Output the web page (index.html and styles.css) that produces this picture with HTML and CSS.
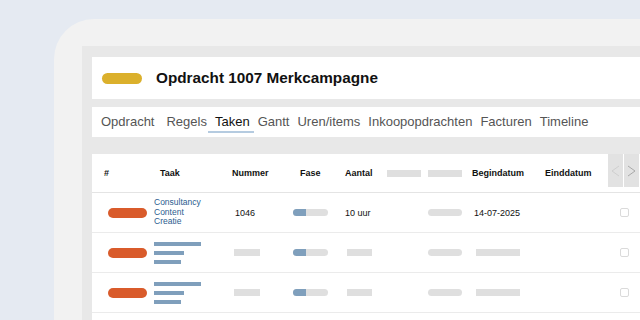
FILE: index.html
```html
<!DOCTYPE html>
<html lang="nl">
<head>
    <meta charset="UTF-8">
    <title>Opdracht 1007 Merkcampagne</title>
    <link rel="stylesheet" href="styles.css">
</head>
<body>
    <div class="device">
        <div class="panel">
            <div class="card title-card">
                <span class="status-pill"></span>
                <h1>Opdracht 1007 Merkcampagne</h1>
            </div>

            <div class="card tabs">
                <span class="tab first">Opdracht</span>
                <span class="tab">Regels</span>
                <span class="tab active">Taken</span>
                <span class="tab">Gantt</span>
                <span class="tab">Uren/items</span>
                <span class="tab">Inkoopopdrachten</span>
                <span class="tab">Facturen</span>
                <span class="tab">Timeline</span>
            </div>

            <div class="card table">
                <div class="row thead">
                    <div class="c-hash">#</div>
                    <div class="c-taak">Taak</div>
                    <div class="c-nummer">Nummer</div>
                    <div class="c-fase">Fase</div>
                    <div class="c-aantal">Aantal</div>
                    <div><span class="ph head-ph"></span></div>
                    <div><span class="ph head-ph"></span></div>
                    <div>Begindatum</div>
                    <div>Einddatum</div>
                    <div class="nav">
                        <span class="nav-btn prev">
                            <svg width="9" height="12" viewBox="0 0 9 12"><polyline points="8,1 1,6 8,11" fill="none" stroke="#cfcfcf" stroke-width="1"/></svg>
                        </span>
                        <span class="nav-btn next">
                            <svg width="9" height="12" viewBox="0 0 9 12"><polyline points="1,1 8,6 1,11" fill="none" stroke="#a9a9a9" stroke-width="1"/></svg>
                        </span>
                    </div>
                </div>

                <div class="row trow">
                    <div><span class="task-pill"></span></div>
                    <div class="task-name">Consultancy<br>Content<br>Creatie</div>
                    <div class="val-nummer">1046</div>
                    <div><span class="phase"><span class="phase-fill"></span></span></div>
                    <div>10 uur</div>
                    <div></div>
                    <div><span class="ph pill"></span></div>
                    <div class="val-date">14-07-2025</div>
                    <div></div>
                    <div class="check-cell"><span class="check"></span></div>
                </div>

                <div class="row trow">
                    <div><span class="task-pill"></span></div>
                    <div class="lines"><span class="l1"></span><span class="l2"></span><span class="l3"></span></div>
                    <div><span class="ph ph-nummer"></span></div>
                    <div><span class="phase"><span class="phase-fill"></span></span></div>
                    <div><span class="ph ph-aantal"></span></div>
                    <div></div>
                    <div><span class="ph pill"></span></div>
                    <div><span class="ph ph-date"></span></div>
                    <div></div>
                    <div class="check-cell"><span class="check"></span></div>
                </div>

                <div class="row trow">
                    <div><span class="task-pill"></span></div>
                    <div class="lines"><span class="l1"></span><span class="l2"></span><span class="l3"></span></div>
                    <div><span class="ph ph-nummer"></span></div>
                    <div><span class="phase"><span class="phase-fill"></span></span></div>
                    <div><span class="ph ph-aantal"></span></div>
                    <div></div>
                    <div><span class="ph pill"></span></div>
                    <div><span class="ph ph-date"></span></div>
                    <div></div>
                    <div class="check-cell"><span class="check"></span></div>
                </div>

                <div class="row trow"></div>
            </div>
        </div>
    </div>
</body>
</html>
```

FILE: styles.css
```css
/* page + device frame */
body {
    margin: 0;
    height: 320px;
    overflow: hidden;
    background-color: #e5eaf2;
    font-family: "Liberation Sans", Arial, sans-serif;
    color: #111;
}
.device {
    margin: 19px 0 0 54px;
    padding: 27px 0 0 28px;
    height: 400px;
    background-color: #f2f2f2;
    border-top-left-radius: 40px;
}
.panel {
    display: flex;
    flex-direction: column;
    height: 100%;
    padding: 11px 0 0 10px;
    background-color: #e8e8e8;
}
.card {
    background-color: #fff;
}

/* title */
.title-card {
    display: flex;
    align-items: center;
    height: 42px;
    padding-left: 10px;
}
.status-pill {
    width: 40px;
    height: 11px;
    border-radius: 6px;
    background-color: #dbb02c;
}
h1 {
    margin: 0 0 0 14px;
    font-size: 15.3px;
    font-weight: bold;
    color: #111;
}

/* tabs */
.tabs {
    display: flex;
    align-items: center;
    height: 30px;
    margin-top: 8px;
    padding-left: 5px;
}
.tab {
    position: relative;
    padding: 0 4px;
    font-size: 13px;
    color: #555;
    line-height: 30px;
}
.tab.first {
    margin-right: 4px;
}
.tab.active {
    color: #111;
}
.tab.active::after {
    content: "";
    position: absolute;
    left: -3px;
    width: 46px;
    bottom: 4px;
    height: 2px;
    background-color: #b5cbe0;
}

/* table */
.table {
    flex: 1;
    margin-top: 17px;
    font-size: 9px;
}
.row {
    display: grid;
    grid-template-columns: 62px 78px 61px 52px 42px 41px 44px 73px 63px 1fr;
    align-items: center;
}
.thead {
    height: 38px;
    font-weight: bold;
    border-bottom: 1px solid #e4e4e4;
}
.trow {
    height: 39px;
    border-bottom: 1px solid #ebebeb;
}
.c-hash { padding-left: 12px; }
.c-taak { padding-left: 6px; }
.c-fase { padding-left: 7px; }

.nav {
    display: flex;
    align-self: start;
    gap: 1px;
    height: 33px;
}
.nav-btn {
    width: 15px;
    display: flex;
    align-items: center;
    justify-content: center;
    background-color: #e2e2e2;
}

/* placeholders */
.ph {
    display: block;
    height: 7px;
    background-color: #dfdfdf;
}
.head-ph {
    width: 34px;
}
.pill {
    width: 34px;
    border-radius: 4px;
}
.ph-nummer { width: 26px; margin-left: 2px; }
.ph-aantal { width: 25px; margin-left: 2px; }
.ph-date { width: 44px; margin-left: 4px; }

.task-pill {
    display: block;
    width: 39px;
    height: 10px;
    margin-left: 16px;
    border-radius: 5px;
    background-color: #d95b2b;
}
.task-name {
    font-size: 8.5px;
    line-height: 9.5px;
    color: #2b5d8f;
}
.val-nummer { padding-left: 3px; }
.val-date { padding-left: 2px; }

.lines {
    display: flex;
    flex-direction: column;
    gap: 5px;
}
.lines span {
    display: block;
    height: 4px;
    background-color: #7f9fbc;
}
.lines .l1 { width: 47px; }
.lines .l2 { width: 30px; }
.lines .l3 { width: 27px; }

.phase {
    display: block;
    width: 35px;
    height: 7px;
    border-radius: 4px;
    background-color: #dfdfdf;
    overflow: hidden;
}
.phase-fill {
    display: block;
    width: 13px;
    height: 100%;
    background-color: #7f9fbc;
}

.check-cell {
    padding-left: 12px;
}
.check {
    display: block;
    width: 7px;
    height: 7px;
    border: 1px solid #dadada;
    border-radius: 2px;
}
```
